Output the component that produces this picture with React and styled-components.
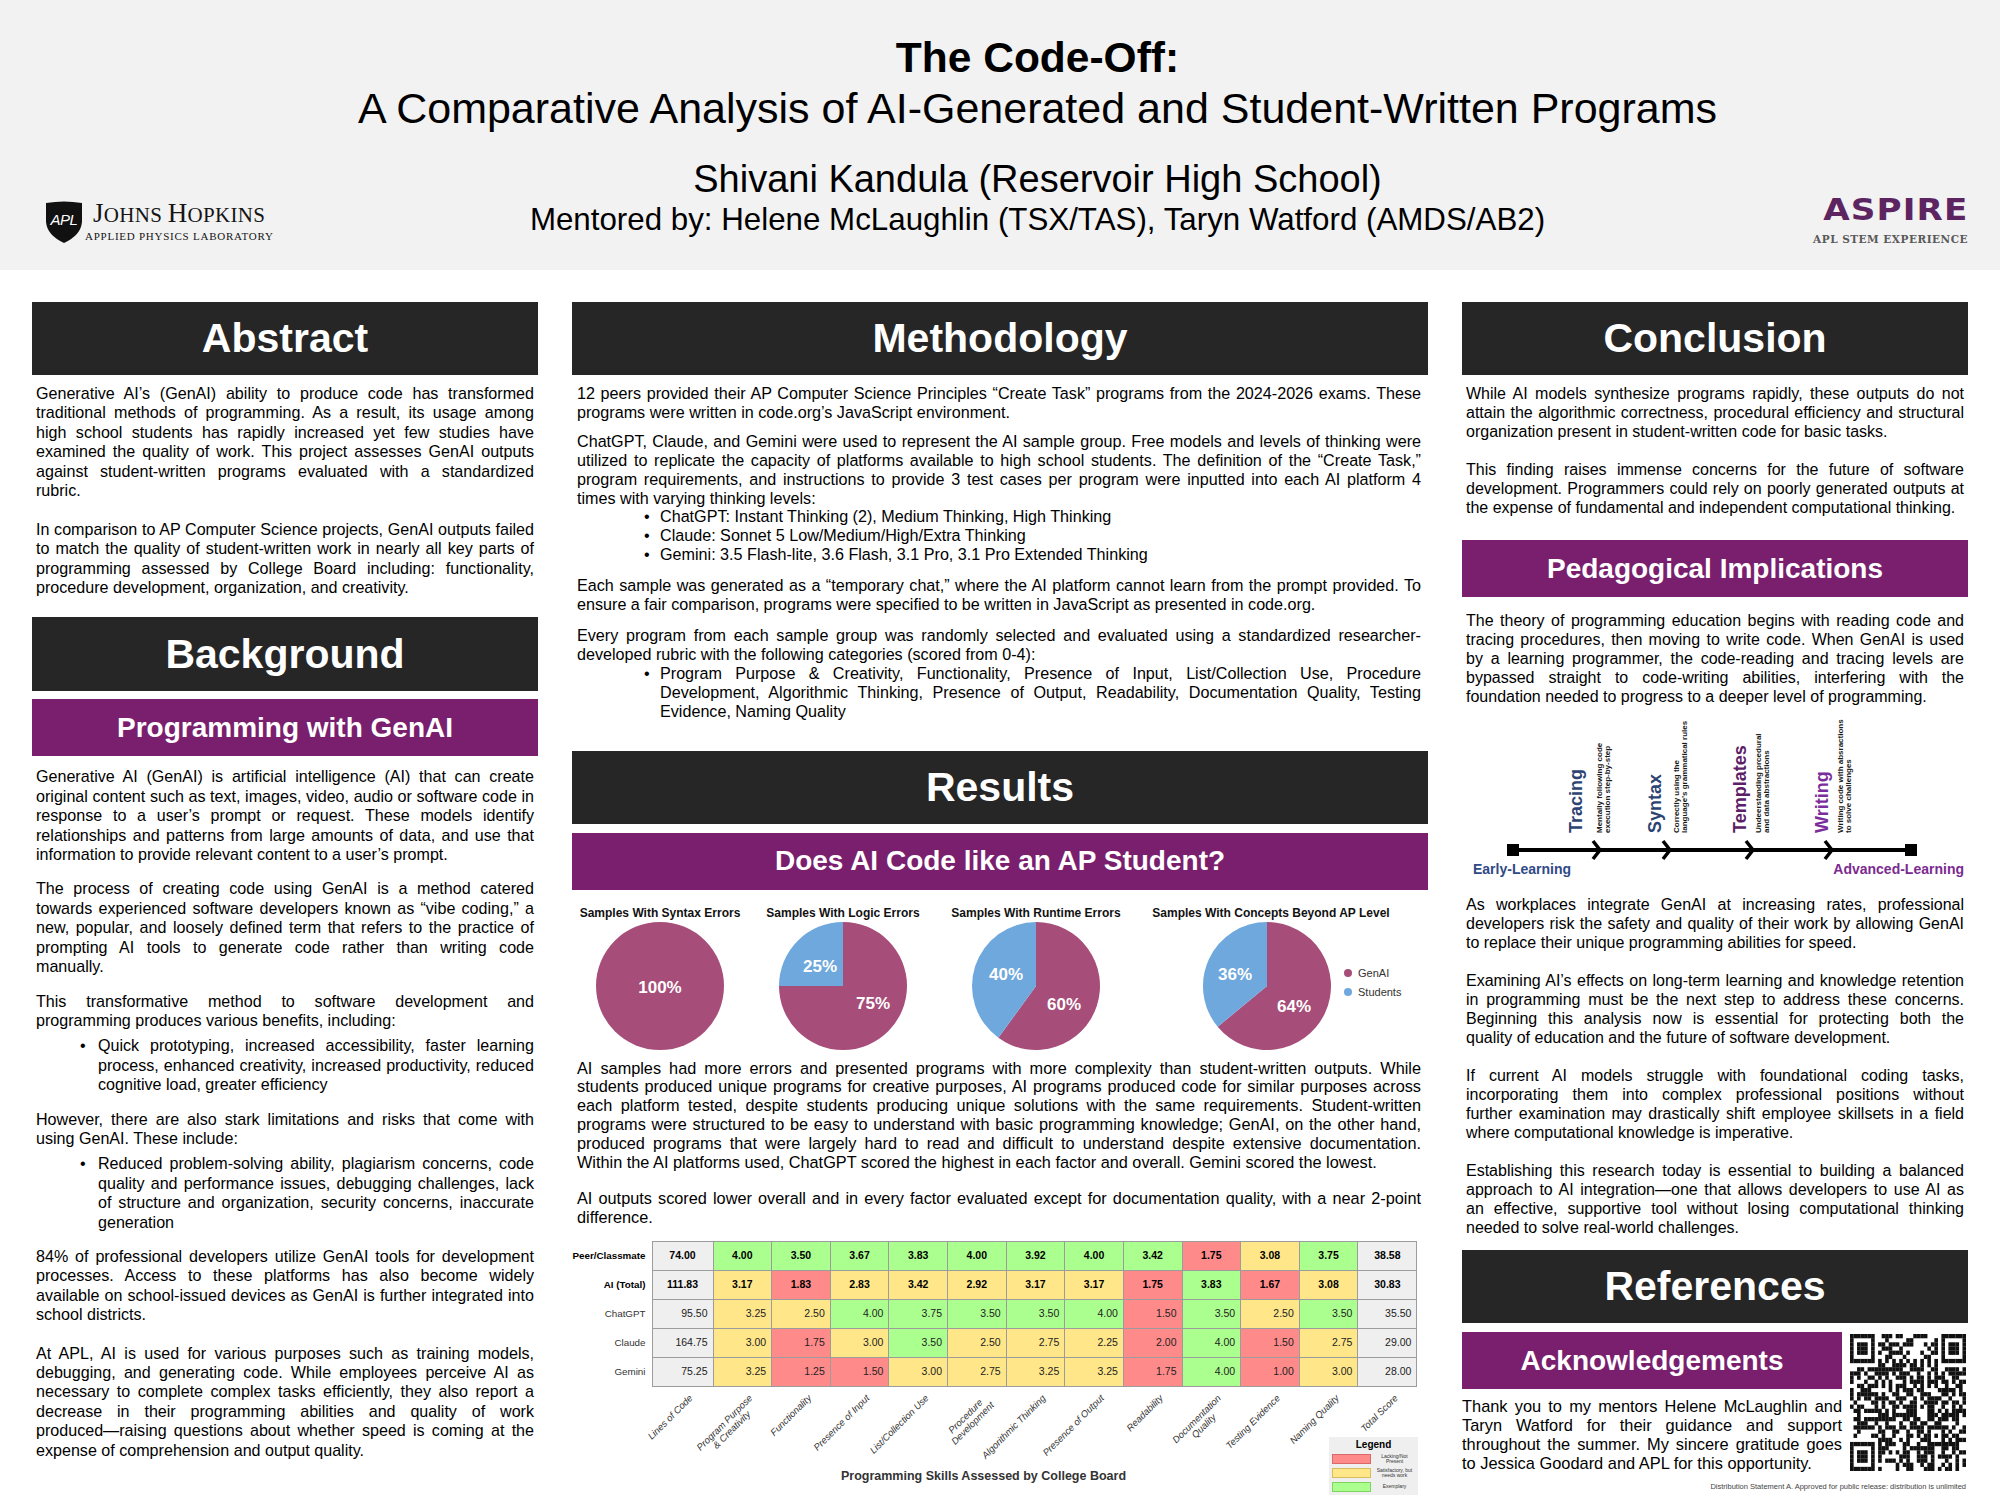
import React from 'react';
import styled, { createGlobalStyle } from 'styled-components';

const palette = {
  dark: '#262626',
  purple: '#7a1f6e',
  genai: '#a64d79',
  students: '#6fa8dc',
  green: '#abff8e',
  yellow: '#ffe789',
  red: '#ff8a8a',
  gray: '#efefef',
  navy: '#2d4372',
};

const GlobalStyle = createGlobalStyle`
  * { box-sizing: border-box; }
  body {
    margin: 0;
    background: #fff;
    color: #000;
    font-family: 'Liberation Sans', Arial, sans-serif;
  }
`;

const Poster = styled.div`
  width: 2000px;
  height: 1500px;
  overflow: hidden;
  background: #fff;
`;

/* ---------- header ---------- */

const Header = styled.header`
  height: 270px;
  background: #f2f2f2;
  display: flex;
  padding: 0 32px 0 45px;
`;

const JhuLogo = styled.div`
  align-self: flex-end;
  margin-bottom: 27px;
  width: 240px;
  display: flex;
  align-items: center;
`;

const JhuText = styled.div`
  margin-left: 2px;
  font-family: 'Liberation Serif', 'Times New Roman', serif;
  color: #151515;
`;

const JhuName = styled.div`
  padding-left: 8px;
  font-size: 21px;
  line-height: 24px;
  letter-spacing: 0.3px;
  span {
    font-size: 27px;
  }
`;

const JhuSub = styled.div`
  margin-top: 3px;
  font-size: 11px;
  line-height: 13px;
  letter-spacing: 0.75px;
`;

const TitleBlock = styled.div`
  flex: 1;
  text-align: center;
  padding: 34px 18px 0 0;
`;

const Title = styled.h1`
  margin: 0;
  font-size: 42.5px;
  line-height: 48px;
  font-weight: 700;
`;

const Subtitle = styled.div`
  margin-top: 2px;
  font-size: 43px;
  line-height: 48px;
`;

const Author = styled.div`
  margin-top: 26px;
  font-size: 38px;
  line-height: 42px;
`;

const Mentors = styled.div`
  margin-top: 2px;
  font-size: 31.3px;
  line-height: 36px;
`;

const AspireLogo = styled.div`
  align-self: flex-end;
  margin-bottom: 25px;
  width: 160px;
  display: flex;
  flex-direction: column;
  align-items: flex-end;
`;

const AspireWord = styled.div`
  font-family: 'DejaVu Sans', sans-serif;
  font-weight: 700;
  font-size: 30px;
  line-height: 28px;
  letter-spacing: 1px;
  margin-right: -1px;
  color: #5c2461;
  transform: scaleX(1.14);
  transform-origin: 100% 50%;
`;

const AspireSub = styled.div`
  margin-top: 9px;
  font-family: 'DejaVu Serif', serif;
  font-weight: 700;
  font-size: 10.5px;
  line-height: 12px;
  letter-spacing: 0.5px;
  color: #5a5a5a;
`;

/* ---------- body ---------- */

const Columns = styled.main`
  display: grid;
  grid-template-columns: 506px 856px 506px;
  column-gap: 34px;
  padding: 32px 32px 0;
  align-items: start;
`;

const Column = styled.section`
  display: flex;
  flex-direction: column;
  font-size: ${(p) => p.$fs}px;
  line-height: ${(p) => p.$lh}px;
`;

const SectionHead = styled.h2`
  margin: ${(p) => p.$mt || 0}px 0 0;
  height: ${(p) => p.$h || 73}px;
  background: ${palette.dark};
  color: #fff;
  font-size: 41px;
  font-weight: 700;
  display: flex;
  align-items: center;
  justify-content: center;
`;

const SubHead = styled.h3`
  margin: ${(p) => p.$mt || 0}px 0 0;
  height: 57px;
  background: ${palette.purple};
  color: #fff;
  font-size: 28px;
  font-weight: 700;
  display: flex;
  align-items: center;
  justify-content: center;
`;

const Text = styled.p`
  margin: ${(p) => p.$mt || 0}px 0 0;
  padding: ${(p) => p.$pad || '0 4px'};
  font-size: ${(p) => (p.$fs ? `${p.$fs}px` : 'inherit')};
  text-align: justify;
`;

const Bullets = styled.ul`
  margin: ${(p) => p.$mt || 0}px 0 0;
  padding: 0 ${(p) => p.$right || 4}px 0 ${(p) => p.$indent - p.$dot}px;
  list-style: none;
  text-align: justify;
  li {
    display: flex;
  }
  li::before {
    content: '•';
    flex: none;
    width: ${(p) => p.$dot}px;
  }
`;

/* ---------- pies ---------- */

const ChartRow = styled.div`
  display: flex;
  margin-top: 16px;
`;

const ChartItem = styled.div`
  width: ${(p) => p.$w}px;
  flex: none;
`;

const ChartTitle = styled.div`
  font-size: 12px;
  line-height: 15px;
  font-weight: 700;
  color: #111;
  text-align: center;
  white-space: nowrap;
`;

const PieRow = styled.div`
  display: flex;
  align-items: center;
  padding-left: ${(p) => p.$pad}px;
`;

const PieLegend = styled.div`
  margin: 0 0 7px 12px;
  display: flex;
  flex-direction: column;
  gap: 5px;
  font-size: 11px;
  line-height: 14px;
  color: #333;
`;

const LegendItem = styled.div`
  display: flex;
  align-items: center;
  gap: 6px;
  &::before {
    content: '';
    width: 8px;
    height: 8px;
    border-radius: 50%;
    background: ${(p) => p.$color};
  }
`;

const point = (cx, cy, r, f) => [
  cx + r * Math.sin(2 * Math.PI * f),
  cy - r * Math.cos(2 * Math.PI * f),
];

const slice = (cx, cy, r, a, b) => {
  const [x0, y0] = point(cx, cy, r, a);
  const [x1, y1] = point(cx, cy, r, b);
  const large = b - a > 0.5 ? 1 : 0;
  return `M${cx} ${cy} L${x0} ${y0} A${r} ${r} 0 ${large} 1 ${x1} ${y1} Z`;
};

const Pie = ({ genai, labels }) => (
  <svg width="130" height="130" viewBox="0 0 130 130">
    {genai >= 1 ? (
      <circle cx="65" cy="65" r="64" fill={palette.genai} />
    ) : (
      <>
        <path d={slice(65, 65, 64, 0, genai)} fill={palette.genai} />
        <path d={slice(65, 65, 64, genai, 1)} fill={palette.students} />
      </>
    )}
    {labels.map((l) => (
      <text
        key={l.t}
        x={65 + l.x}
        y={65 + l.y}
        dy="0.36em"
        textAnchor="middle"
        fill="#fff"
        fontSize="17"
        fontWeight="700"
        fontFamily="'Liberation Sans', Arial, sans-serif"
      >
        {l.t}
      </text>
    ))}
  </svg>
);

const charts = [
  { title: 'Samples With Syntax Errors', w: 176, pad: 23, genai: 1, labels: [{ t: '100%', x: 0, y: 1 }] },
  {
    title: 'Samples With Logic Errors', w: 190, pad: 30, genai: 0.75,
    labels: [{ t: '25%', x: -23, y: -20 }, { t: '75%', x: 30, y: 17 }],
  },
  {
    title: 'Samples With Runtime Errors', w: 196, pad: 33, genai: 0.6,
    labels: [{ t: '40%', x: -30, y: -12 }, { t: '60%', x: 28, y: 18 }],
  },
  {
    title: 'Samples With Concepts Beyond AP Level', w: 274, pad: 68, genai: 0.64, legend: true,
    labels: [{ t: '36%', x: -32, y: -12 }, { t: '64%', x: 27, y: 20 }],
  },
];

/* ---------- table ---------- */

const fills = { g: palette.green, y: palette.yellow, r: palette.red, n: palette.gray };

const ScoreTable = styled.table`
  margin-top: 14px;
  width: 845px;
  border-collapse: collapse;
  table-layout: fixed;
  line-height: 13px;
`;

const Col = styled.col`
  width: ${(p) => p.$w}px;
`;

const RowLabel = styled.th`
  padding: 0 6px 0 0;
  text-align: right;
  font-size: 9.8px;
  font-weight: ${(p) => (p.$bold ? 700 : 400)};
  color: ${(p) => (p.$bold ? '#000' : '#333')};
  white-space: nowrap;
`;

const Cell = styled.td`
  height: 29px;
  padding: 0 5px;
  border: 1px solid #9c9c9c;
  background: ${(p) => fills[p.$tone]};
  text-align: ${(p) => (p.$bold ? 'center' : 'right')};
  font-weight: ${(p) => (p.$bold ? 700 : 400)};
  font-size: 10.5px;
  color: ${(p) => (p.$bold ? '#000' : '#222')};
`;

const rows = [
  { name: 'Peer/Classmate', bold: true, loc: '74.00', total: '38.58',
    cells: ['4.00g', '3.50g', '3.67g', '3.83g', '4.00g', '3.92g', '4.00g', '3.42g', '1.75r', '3.08y', '3.75g'] },
  { name: 'AI (Total)', bold: true, loc: '111.83', total: '30.83',
    cells: ['3.17y', '1.83r', '2.83y', '3.42y', '2.92y', '3.17y', '3.17y', '1.75r', '3.83g', '1.67r', '3.08y'] },
  { name: 'ChatGPT', loc: '95.50', total: '35.50',
    cells: ['3.25y', '2.50y', '4.00g', '3.75g', '3.50g', '3.50g', '4.00g', '1.50r', '3.50g', '2.50y', '3.50g'] },
  { name: 'Claude', loc: '164.75', total: '29.00',
    cells: ['3.00y', '1.75r', '3.00y', '3.50g', '2.50y', '2.75y', '2.25y', '2.00r', '4.00g', '1.50r', '2.75y'] },
  { name: 'Gemini', loc: '75.25', total: '28.00',
    cells: ['3.25y', '1.25r', '1.50r', '3.00y', '2.75y', '3.25y', '3.25y', '1.75r', '4.00g', '1.00r', '3.00y'] },
];

const skills = [
  ['Lines of Code'], ['Program Purpose', '& Creativity'], ['Functionality'], ['Presence of Input'],
  ['List/Collection Use'], ['Procedure', 'Development'], ['Algorithmic Thinking'], ['Presence of Output'],
  ['Readability'], ['Documentation', 'Quality'], ['Testing Evidence'], ['Naming Quality'], ['Total Score'],
];

const colWidths = [61, ...Array(11).fill(58.64), 59];

const AxisRow = styled.div`
  display: flex;
  height: 50px;
  padding-left: 80px;
`;

const AxisCell = styled.div`
  position: relative;
  flex: none;
  width: ${(p) => p.$w}px;
`;

const AxisLabel = styled.span`
  position: absolute;
  top: 6px;
  right: calc(50% - 5px);
  transform-origin: 100% 0;
  transform: rotate(-45deg);
  white-space: nowrap;
  text-align: center;
  font-size: 9.5px;
  line-height: 10px;
  font-style: italic;
  color: #333;
`;

const ChartFoot = styled.div`
  display: flex;
  align-items: flex-end;
`;

const Caption = styled.div`
  flex: 1;
  padding-left: 66px;
  margin-bottom: 11px;
  text-align: center;
  font-size: 12.5px;
  line-height: 15px;
  font-weight: 700;
  color: #333;
`;

const LegendBox = styled.div`
  width: 89px;
  margin-right: 10px;
  padding: 2px 3px 3px;
  background: #efefef;
`;

const LegendTitle = styled.div`
  text-align: center;
  font-size: 10px;
  line-height: 12px;
  font-weight: 700;
`;

const LegendRow = styled.div`
  display: flex;
  align-items: center;
  gap: 3px;
  margin-top: 3px;
`;

const Swatch = styled.span`
  flex: none;
  width: 39px;
  height: 10px;
  background: ${(p) => fills[p.$tone]};
  border: 1px solid ${(p) => (p.$tone === 'r' ? '#d86a6a' : p.$tone === 'y' ? '#d6bd5a' : '#7fd460')};
`;

const LegendText = styled.span`
  flex: 1;
  text-align: center;
  font-size: 5px;
  line-height: 5.5px;
  color: #333;
`;

/* ---------- right column ---------- */

const Timeline = styled.svg`
  display: block;
  margin-top: 4px;
  width: 506px;
  height: 170px;
`;

const AckRow = styled.div`
  display: flex;
  gap: 8px;
  margin-top: 9px;
`;

const AckMain = styled.div`
  width: 380px;
  flex: none;
`;

const QrBox = styled.svg`
  flex: none;
  width: 116px;
  height: 137px;
  margin-top: 2px;
`;

const Distribution = styled.div`
  margin-top: 9px;
  padding-right: 2px;
  text-align: right;
  font-size: 7.5px;
  line-height: 9px;
  color: #444;
`;

const buildQr = (n) => {
  let seed = 20240611;
  const rnd = () => {
    seed = (seed * 1664525 + 1013904223) >>> 0;
    return seed / 4294967296;
  };
  const grid = Array.from({ length: n }, () => Array.from({ length: n }, () => rnd() < 0.52));
  const finder = (r0, c0) => {
    for (let r = -1; r <= 7; r++) {
      for (let c = -1; c <= 7; c++) {
        const rr = r0 + r;
        const cc = c0 + c;
        if (rr < 0 || cc < 0 || rr >= n || cc >= n) continue;
        const inside = r >= 0 && r <= 6 && c >= 0 && c <= 6;
        const ring = r === 0 || r === 6 || c === 0 || c === 6;
        const core = r >= 2 && r <= 4 && c >= 2 && c <= 4;
        grid[rr][cc] = inside && (ring || core);
      }
    }
  };
  finder(0, 0);
  finder(0, n - 7);
  finder(n - 7, 0);
  for (let i = 8; i < n - 8; i++) {
    grid[6][i] = i % 2 === 0;
    grid[i][6] = i % 2 === 0;
  }
  const a = n - 9;
  for (let r = -2; r <= 2; r++) {
    for (let c = -2; c <= 2; c++) grid[a + r][a + c] = Math.max(Math.abs(r), Math.abs(c)) !== 1;
  }
  return grid;
};

const QR = buildQr(33);

const QrCode = () => (
  <QrBox viewBox="0 0 33 33" preserveAspectRatio="none">
    {QR.flatMap((row, r) =>
      row.map((on, c) => (on ? <rect key={`${r}-${c}`} x={c} y={r} width="1.03" height="1.03" fill="#111" /> : null))
    )}
  </QrBox>
);

const stages = [
  { word: 'Tracing', x: 120, color: palette.navy, desc: ['Mentally following code', 'execution step-by-step'], dx: 139.5, tip: 138 },
  { word: 'Syntax', x: 199, color: palette.navy, desc: ['Correctly using the', 'language’s grammatical rules'], dx: 217, tip: 208 },
  { word: 'Templates', x: 284, color: '#5b2067', desc: ['Undeerstanding prcedural', 'and data abstractions'], dx: 299, tip: 291 },
  { word: 'Writing', x: 366, color: '#7a2e9b', desc: ['Writing code with absractions', 'to solve challenges'], dx: 381, tip: 370 },
];

const LearningPath = () => (
  <Timeline viewBox="0 0 506 170" fontFamily="'Liberation Sans', Arial, sans-serif">
    <line x1="50" y1="140" x2="449" y2="140" stroke="#000" strokeWidth="4" />
    <rect x="45" y="134" width="12" height="12" fill="#000" />
    <rect x="443" y="134" width="12" height="12" fill="#000" />
    {stages.map((s) => (
      <g key={s.word}>
        <polyline
          points={`${s.tip - 7},131 ${s.tip},140 ${s.tip - 7},149`}
          fill="none"
          stroke="#000"
          strokeWidth="3.5"
        />
        <text transform={`translate(${s.x},123) rotate(-90)`} fontSize="18" fontWeight="700" fill={s.color}>
          {s.word}
        </text>
        {s.desc.map((line, i) => (
          <text
            key={line}
            transform={`translate(${s.dx + i * 8},123) rotate(-90)`}
            fontSize="8"
            fontWeight="700"
            fill="#1a1a1a"
          >
            {line}
          </text>
        ))}
      </g>
    ))}
    <text x="11" y="164" fontSize="14" fontWeight="700" fill="#2f4a86">Early-Learning</text>
    <text x="502" y="164" textAnchor="end" fontSize="14" fontWeight="700" fill="#7b2a91">Advanced-Learning</text>
  </Timeline>
);

const Shield = () => (
  <svg width="38" height="43" viewBox="0 0 38 43">
    <path d="M1 3 Q19 0 37 3 L37 22 Q36 35 19 43 Q2 35 1 22 Z" fill="#111" />
    <text
      x="19"
      y="25"
      textAnchor="middle"
      fill="#fff"
      fontSize="15"
      fontStyle="italic"
      fontFamily="'Liberation Sans', Arial, sans-serif"
      letterSpacing="-0.5"
    >
      APL
    </text>
  </svg>
);

const App = () => (
  <Poster>
    <GlobalStyle />
    <Header>
      <JhuLogo>
        <Shield />
        <JhuText>
          <JhuName>
            <span>J</span>OHNS <span>H</span>OPKINS
          </JhuName>
          <JhuSub>APPLIED PHYSICS LABORATORY</JhuSub>
        </JhuText>
      </JhuLogo>
      <TitleBlock>
        <Title>The Code-Off:</Title>
        <Subtitle>A Comparative Analysis of AI-Generated and Student-Written Programs</Subtitle>
        <Author>Shivani Kandula (Reservoir High School)</Author>
        <Mentors>Mentored by: Helene McLaughlin (TSX/TAS), Taryn Watford (AMDS/AB2)</Mentors>
      </TitleBlock>
      <AspireLogo>
        <AspireWord>ASPIRE</AspireWord>
        <AspireSub>APL STEM EXPERIENCE</AspireSub>
      </AspireLogo>
    </Header>

    <Columns>
      <Column $fs={16.1} $lh={19.4}>
        <SectionHead>Abstract</SectionHead>
        <Text $mt={9}>
          Generative AI’s (GenAI) ability to produce code has transformed traditional methods of programming. As a
          result, its usage among high school students has rapidly increased yet few studies have examined the quality
          of work. This project assesses GenAI outputs against student-written programs evaluated with a standardized
          rubric.
        </Text>
        <Text $mt={19.4}>
          In comparison to AP Computer Science projects, GenAI outputs failed to match the quality of  student-written
          work in nearly all key parts of programming assessed by College Board including: functionality, procedure
          development, organization, and creativity.
        </Text>
        <SectionHead $mt={20} $h={74}>Background</SectionHead>
        <SubHead $mt={8}>Programming with GenAI</SubHead>
        <Text $mt={11}>
          Generative AI (GenAI) is artificial intelligence (AI) that can create original content such as text, images,
          video, audio or software code in response to a user’s prompt or request. These models identify relationships
          and patterns from large amounts of data, and use that information to provide relevant content to a user’s
          prompt.
        </Text>
        <Text $mt={15}>
          The process of creating code using GenAI is a method catered towards experienced software developers known as
          “vibe coding,” a new, popular, and loosely defined term that refers to the practice of prompting AI tools to
          generate code rather than writing code manually.
        </Text>
        <Text $mt={15}>
          This transformative method to software development and programming produces various benefits, including:
        </Text>
        <Bullets $mt={6} $indent={66} $dot={18}>
          <li>
            Quick prototyping, increased accessibility, faster learning process, enhanced creativity, increased
            productivity, reduced cognitive load, greater efficiency
          </li>
        </Bullets>
        <Text $mt={15}>
          However, there are also stark limitations and risks that come with using GenAI. These include:
        </Text>
        <Bullets $mt={6} $indent={66} $dot={18}>
          <li>
            Reduced problem-solving ability, plagiarism concerns, code quality and performance issues, debugging
            challenges, lack of structure and organization, security concerns, inaccurate generation
          </li>
        </Bullets>
        <Text $mt={15}>
          84% of professional developers utilize GenAI tools for development processes. Access to these platforms has
          also become widely available on school-issued devices as GenAI is further integrated into school districts.
        </Text>
        <Text $mt={19}>
          At APL, AI is used for various purposes such as training models, debugging, and generating code. While
          employees perceive AI as necessary to complete complex tasks efficiently, they also report a decrease in their
          programming abilities and quality of work produced&#8288;—&#8288;raising questions about whether speed is
          coming at the expense of comprehension and output quality.
        </Text>
      </Column>

      <Column $fs={16.15} $lh={18.9}>
        <SectionHead>Methodology</SectionHead>
        <Text $mt={9} $pad="0 7px 0 5px">
          12 peers provided their AP Computer Science Principles “Create Task” programs from the 2024-2026 exams. These
          programs were written in code.org’s JavaScript environment.
        </Text>
        <Text $mt={10} $pad="0 7px 0 5px">
          ChatGPT, Claude, and Gemini were used to represent the AI sample group. Free models and levels of thinking
          were utilized to replicate the capacity of platforms available to high school students. The definition of the
          “Create Task,” program requirements, and instructions to provide 3 test cases per program were inputted into
          each AI platform 4 times with varying thinking levels:
        </Text>
        <Bullets $indent={88} $dot={16} $right={7}>
          <li>ChatGPT: Instant Thinking (2), Medium Thinking, High Thinking</li>
          <li>Claude: Sonnet 5 Low/Medium/High/Extra Thinking</li>
          <li>Gemini: 3.5 Flash-lite, 3.6 Flash, 3.1 Pro, 3.1 Pro Extended Thinking</li>
        </Bullets>
        <Text $mt={12} $pad="0 7px 0 5px">
          Each sample was generated as a “temporary chat,” where the AI platform cannot learn from the prompt provided.
          To ensure a fair comparison, programs were specified to be written in JavaScript as presented in code.org.
        </Text>
        <Text $mt={12} $pad="0 7px 0 5px">
          Every program from each sample group was randomly selected and evaluated using a standardized
          researcher-developed rubric with the following categories (scored from 0-4):
        </Text>
        <Bullets $indent={88} $dot={16} $right={7}>
          <li>
            Program Purpose &amp; Creativity, Functionality, Presence of Input, List/Collection Use, Procedure
            Development, Algorithmic Thinking, Presence of Output, Readability, Documentation Quality, Testing
            Evidence, Naming Quality
          </li>
        </Bullets>
        <SectionHead $mt={30}>Results</SectionHead>
        <SubHead $mt={9}>Does AI Code like an AP Student?</SubHead>
        <ChartRow>
          {charts.map((c) => (
            <ChartItem key={c.title} $w={c.w}>
              <ChartTitle>{c.title}</ChartTitle>
              <PieRow $pad={c.pad}>
                <Pie genai={c.genai} labels={c.labels} />
                {c.legend && (
                  <PieLegend>
                    <LegendItem $color={palette.genai}>GenAI</LegendItem>
                    <LegendItem $color={palette.students}>Students</LegendItem>
                  </PieLegend>
                )}
              </PieRow>
            </ChartItem>
          ))}
        </ChartRow>
        <Text $mt={8} $pad="0 7px 0 5px" $fs={16.3}>
          AI samples had more errors and presented programs with more complexity than student-written outputs. While
          students produced unique programs for creative purposes, AI programs produced code for similar purposes
          across each platform tested, despite students producing unique solutions with the same requirements.
          Student-written programs were structured to be easy to understand with basic programming knowledge; GenAI, on
          the other hand, produced programs that were largely hard to read and difficult to understand despite
          extensive documentation. Within the AI platforms used, ChatGPT scored the highest in each factor and overall.
          Gemini scored the lowest.
        </Text>
        <Text $mt={17} $pad="0 7px 0 5px" $fs={16.3}>
          AI outputs scored lower overall and in every factor evaluated except for documentation quality, with a near
          2-point difference.
        </Text>
        <ScoreTable>
          <colgroup>
            <Col $w={80} />
            {colWidths.map((w, i) => (
              <Col key={i} $w={w} />
            ))}
          </colgroup>
          <tbody>
            {rows.map((r) => (
              <tr key={r.name}>
                <RowLabel $bold={r.bold}>{r.name}</RowLabel>
                <Cell $tone="n" $bold={r.bold}>{r.loc}</Cell>
                {r.cells.map((v, i) => (
                  <Cell key={i} $tone={v.slice(-1)} $bold={r.bold}>
                    {v.slice(0, -1)}
                  </Cell>
                ))}
                <Cell $tone="n" $bold={r.bold}>{r.total}</Cell>
              </tr>
            ))}
          </tbody>
        </ScoreTable>
        <AxisRow>
          {skills.map((lines, i) => (
            <AxisCell key={lines[0]} $w={colWidths[i]}>
              <AxisLabel>
                {lines.map((l, j) => (
                  <React.Fragment key={l}>
                    {j > 0 && <br />}
                    {l}
                  </React.Fragment>
                ))}
              </AxisLabel>
            </AxisCell>
          ))}
        </AxisRow>
        <ChartFoot>
          <Caption>Programming Skills Assessed by College Board</Caption>
          <LegendBox>
            <LegendTitle>Legend</LegendTitle>
            <LegendRow>
              <Swatch $tone="r" />
              <LegendText>Lacking/Not Present</LegendText>
            </LegendRow>
            <LegendRow>
              <Swatch $tone="y" />
              <LegendText>Satisfactory, but needs work</LegendText>
            </LegendRow>
            <LegendRow>
              <Swatch $tone="g" />
              <LegendText>Exemplary</LegendText>
            </LegendRow>
          </LegendBox>
        </ChartFoot>
      </Column>

      <Column $fs={16} $lh={19}>
        <SectionHead>Conclusion</SectionHead>
        <Text $mt={9}>
          While AI models synthesize programs rapidly, these outputs do not attain the algorithmic correctness,
          procedural efficiency and structural organization present in student-written code for basic tasks.
        </Text>
        <Text $mt={19}>
          This finding raises immense concerns for the future of software development. Programmers could rely on poorly
          generated outputs at the expense of fundamental and independent computational thinking.
        </Text>
        <SubHead $mt={23}>Pedagogical Implications</SubHead>
        <Text $mt={14}>
          The theory of programming education begins with reading code and tracing procedures, then moving to write
          code. When GenAI is used by a learning programmer, the code-reading and tracing levels are bypassed straight
          to code-writing abilities, interfering with the foundation needed to progress to a deeper level of
          programming.
        </Text>
        <LearningPath />
        <Text $mt={15}>
          As workplaces integrate GenAI at increasing rates, professional developers risk the safety and quality of
          their work by allowing GenAI to replace their unique programming abilities for speed.
        </Text>
        <Text $mt={19}>
          Examining AI’s effects on long-term learning and knowledge retention in programming must be the next step to
          address these concerns. Beginning this analysis now is essential for protecting both the
          quality&nbsp;of&nbsp;education and the future of software development.
        </Text>
        <Text $mt={19}>
          If current AI models struggle with foundational coding tasks, incorporating them into complex professional
          positions without further&nbsp;examination may drastically shift employee skillsets in a field where
          computational knowledge is imperative.
        </Text>
        <Text $mt={19}>
          Establishing this research today is essential to building a balanced approach to AI
          integration&#8288;—&#8288;one that allows developers to use AI as an effective, supportive tool without
          losing computational thinking needed to solve real-world challenges.
        </Text>
        <SectionHead $mt={13}>References</SectionHead>
        <AckRow>
          <AckMain>
            <SubHead>Acknowledgements</SubHead>
            <Text $mt={8} $pad="0" $fs={16.4}>
              Thank you to my mentors Helene McLaughlin and Taryn Watford for their guidance and support throughout the
              summer. My sincere gratitude goes to Jessica Goodard and APL for this opportunity.
            </Text>
          </AckMain>
          <QrCode />
        </AckRow>
        <Distribution>Distribution Statement A. Approved for public release: distribution is unlimited</Distribution>
      </Column>
    </Columns>
  </Poster>
);

export default App;
